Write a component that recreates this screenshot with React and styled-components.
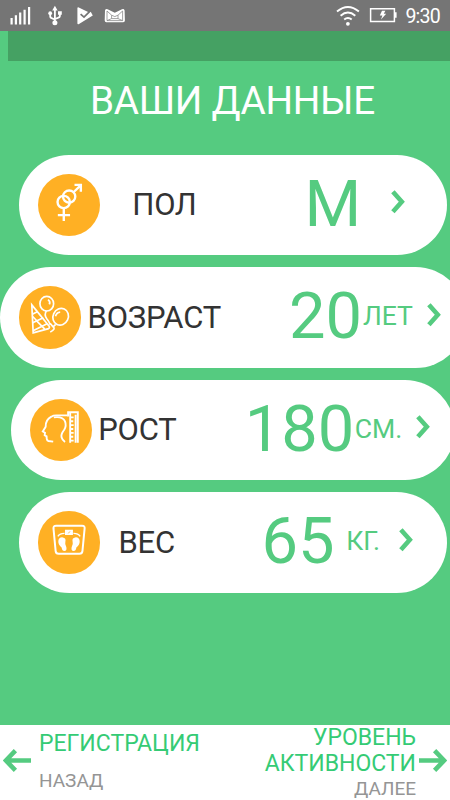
import React from 'react'
import styled, {createGlobalStyle} from 'styled-components'

const green = '#55cb80'

const rows = [
    {id: 'sex', label: 'ПОЛ', value: 'М', unit: '', icon: 'gender', left: 18.6, width: 428, gap: 32.3, cols: [204.4, 87.1, 0]},
    {id: 'age', label: 'ВОЗРАСТ', value: '20', unit: 'ЛЕТ', icon: 'party', left: 0, width: 466, gap: 6.2, cols: [207.7, 73.8, 63.8]},
    {id: 'height', label: 'РОСТ', value: '180', unit: 'СМ.', icon: 'head', left: 11, width: 444, gap: 5.8, cols: [152.4, 109.9, 61.4]},
    {id: 'weight', label: 'ВЕС', value: '65', unit: 'КГ.', icon: 'scale', left: 18.6, width: 428, gap: 18.5, cols: [161.5, 84.8, 52.7]},
]

const icons = {
    gender: (
        <g strokeWidth="2.4">
            <circle cx="25.9" cy="28.2" r="6.2"/>
            <circle cx="31.4" cy="22.8" r="6.2"/>
            <path d="M35.8 18.4L43 11.4M36.8 11H43.2V17.8M26 34.4V47.3M20 41.4H32.3"/>
        </g>
    ),
    party: (
        <g strokeWidth="1.7">
            <path d="M12.9 19L14.3 47.2L29.8 43Q31.4 42 30.2 40.2Z"/>
            <path d="M13.4 28.5L19 25.8M13.8 37L24.5 32M14.2 45L28.3 38M13.5 30.5L17.5 34.5M18 35.5L26 43.5"/>
            <ellipse cx="28" cy="17.8" rx="6.9" ry="7.4"/>
            <path d="M29.2 13.7Q32 15.6 30.6 18.6M27.7 25Q25 29 28 33Q30.5 36 31.5 39"/>
            <ellipse cx="42" cy="31" rx="7.7" ry="8.6" transform="rotate(25 42 31)"/>
            <path d="M36.8 30.5Q38 26.5 41.5 26.3M37 38.7L34.4 41.2Q37.5 43 31.5 46.5M34.4 41.2L31.3 37.5"/>
        </g>
    ),
    head: (
        <g strokeWidth="1.9">
            <path d="M23.4 43L18.4 42.3Q16.5 41.6 16.7 37.6L14.8 36.6L15.1 34L12.9 32.7L15.8 28Q15.5 21 21.5 17.8Q23.5 16.4 27 16.5H38"/>
            <path d="M24 18.5Q33 17.2 35.3 22.5Q37 27 34.5 31Q31 35.5 31.8 38.5Q32.6 41.5 35.3 43.4"/>
            <path d="M38.4 17.6V13.4H48.2V44M40.5 14V44M46 16V44M41 18.5H44M41 22.4H43.6M41 26.3H44M41 30.2H43.6M41 34.1H44M41 38H43.6M41 42H44"/>
        </g>
    ),
    scale: (
        <>
            <path d="M18.2 14.8H44.5Q47.3 14.8 47 17.6L44.8 40.5Q44.5 43.2 41.8 43.2H20.8Q18 43.2 17.8 40.5L15.6 17.6Q15.4 14.8 18.2 14.8Z"/>
            <path strokeWidth="1.4" d="M20 25.5Q22 22.5 26.8 22.6M35.7 22.6Q40.5 22.5 42.5 25.5"/>
            <path fill="#fff" stroke="none" d="M27.2 19H35.2V24.2H27.2ZM20.5 30.3Q21 26.2 25 26.6Q28.5 27 27.6 31Q26.8 33.5 28.6 36.5Q29.3 40.3 26.6 40.4Q24.3 40.4 23.8 36.8Q20.2 34 20.5 30.3ZM42 30.3Q41.5 26.2 37.5 26.6Q34 27 34.9 31Q35.7 33.5 33.9 36.5Q33.2 40.3 35.9 40.4Q38.2 40.4 38.7 36.8Q42.3 34 42 30.3Z"/>
            <path stroke="#ffb024" strokeWidth=".8" d="M30.5 22.6L32.2 20.6"/>
        </>
    ),
}

const StatusIcons = () => (
    <svg width="120" height="31" viewBox="0 0 120 31" fill="#fff">
        <path d="M0.5 18H2.7V24.5H0.5ZM4.8 15.2H7V24.5H4.8ZM9.1 12.5H11.3V24.5H9.1ZM13.5 9.8H15.7V24.5H13.5ZM18 7H20.2V24.5H18Z"/>
        <path fill="none" stroke="#fff" strokeWidth="1.8" d="M44.9 10V22M40.2 13.5V16Q40.2 18 42.2 18.4L44.9 19.5M49.9 12V15.4Q49.9 17.4 47.9 17.8L44.9 19"/>
        <path d="M44.9 5.8L47.6 10.5H42.2ZM48 11.2H51.8V14.8H48Z"/>
        <circle cx="40.2" cy="13.2" r="1.9"/>
        <circle cx="44.9" cy="22.8" r="2.5"/>
        <path d="M67.4 8Q67.6 7 68.8 7.5L78.6 12.2L80.6 11.4L82.8 15.4L69 23.9Q67.6 24.7 67.4 23.4Z"/>
        <path fill="none" stroke="#757575" strokeWidth="1.7" d="M70.6 14.2L74 17.2L80.6 10.6"/>
        <path d="M95 10.4Q95.6 8.4 97.6 9.2L104.8 12.8L112 9.2Q114 8.4 114.6 10.4L114.9 20.6Q114.9 22.2 113.2 22.2H96.4Q94.7 22.2 94.7 20.6Z"/>
        <path fill="none" stroke="#8a8a8a" strokeWidth=".8" d="M97 11L101.6 15.2L104.8 16.6L108 15.2L112.6 11M101.6 15.2V18.6L97 20.6M108 15.2V18.6L112.6 20.6M101.6 18.6H108M97 11V20.6H112.6V11"/>
    </svg>
)

const WifiBattery = () => (
    <svg width="62" height="31" viewBox="336 0 62 31" fill="none" stroke="#fff">
        <path strokeWidth="1.9" d="M337 11.6Q347.9 2.5 358.9 11.6M340.6 15.8Q347.9 9.4 355.3 15.8M344.2 19.5Q347.9 16.4 351.7 19.5"/>
        <circle cx="347.9" cy="23.8" r="1.9" fill="#fff" stroke="none"/>
        <path strokeWidth="1.5" d="M370.6 8.7H394.4V21.4H370.6Z"/>
        <path fill="#fff" stroke="none" d="M394.8 12.3H396.6V17.8H394.8ZM382 10.8H385.4L383.8 13.8H386.2L381 19.6L382.4 15.6H379.8Z"/>
    </svg>
)

const Arrow = ({flip}) => (
    <ArrowSvg $flip={flip} width="28" height="23" viewBox="0 0 28 23">
        <path d="M12.4 1.7L2.9 11.5L12.4 21.3M3.2 11.5H28"/>
    </ArrowSvg>
)

const Row = ({row}) => (
    <Card $left={row.left} $width={row.width} $cols={row.cols}>
        <IconCircle>
            <svg width="62" height="62" viewBox="0 0 62.5 62.5">{icons[row.icon]}</svg>
        </IconCircle>
        <Label $gap={row.gap}>{row.label}</Label>
        <Value>{row.value}</Value>
        <Unit>{row.unit}</Unit>
        <Chevron width="14" height="24" viewBox="0 0 14 24">
            <path d="M1.9 1.8L10.8 11.8L1.9 21.8"/>
        </Chevron>
    </Card>
)

const App = () => (
    <Screen>
        <GlobalStyle/>
        <StatusBar>
            <StatusIcons/>
            <StatusRight>
                <WifiBattery/>
                <Clock>9:30</Clock>
            </StatusRight>
        </StatusBar>
        <Banner/>
        <Title>ВАШИ ДАННЫЕ</Title>
        <List>
            {rows.map(row => <Row key={row.id} row={row}/>)}
        </List>
        <Footer>
            <NavButton>
                <Arrow/>
                <NavText>
                    <NavTitle $space="11.5px">РЕГИСТРАЦИЯ</NavTitle>
                    <NavHint>НАЗАД</NavHint>
                </NavText>
            </NavButton>
            <NavButton>
                <NavText $right>
                    <NavTitle>УРОВЕНЬ<br/>АКТИВНОСТИ</NavTitle>
                    <NavHint>ДАЛЕЕ</NavHint>
                </NavText>
                <Arrow flip/>
            </NavButton>
        </Footer>
    </Screen>
)

export default App

const GlobalStyle = createGlobalStyle `
    body {
        margin: 0;
        background: ${green};
        font-family: Roboto, sans-serif;
    }
    * {
        box-sizing: border-box;
    }
`
const Screen = styled.div `
    display: flex;
    flex-direction: column;
    width: 450px;
    height: 800px;
    overflow: hidden;
    background: ${green};
`
const StatusBar = styled.header `
    display: flex;
    justify-content: space-between;
    align-items: center;
    flex: none;
    height: 31px;
    padding: 0 10px;
    background: #757575;
`
const StatusRight = styled.div `
    display: flex;
    align-items: center;
    gap: 7.5px;
`
const Clock = styled.span `
    color: #fff;
    font-size: 19.6px;
    line-height: 31px;
    letter-spacing: -0.8px;
    padding-top: 1px;
`
const Banner = styled.div `
    flex: none;
    height: 30px;
    margin-left: 7.7px;
    background: #45a163;
`
const Title = styled.h1 `
    flex: none;
    margin: 20px 0 0 15px;
    height: 74px;
    color: #fff;
    font-size: 38.7px;
    font-weight: 400;
    line-height: 40px;
    letter-spacing: -0.3px;
    text-align: center;
    white-space: nowrap;
`
const List = styled.main `
    display: flex;
    flex-direction: column;
    flex: 1;
    gap: 12.4px;
`
const Card = styled.div `
    display: grid;
    grid-template-columns: 62.4px ${props => props.$cols.map(c => `${c}px`).join(' ')} 14px;
    align-items: center;
    flex: none;
    width: ${props => props.$width}px;
    height: 100.1px;
    margin-left: ${props => props.$left}px;
    padding-left: 19px;
    border-radius: 51px;
    background: #fff;
    white-space: nowrap;
    line-height: 1;
`
const IconCircle = styled.div `
    width: 62.4px;
    height: 62.4px;
    border-radius: 50%;
    background: #ffb024;
    svg {
        display: block;
        fill: none;
        stroke: #fff;
        stroke-width: 2;
    }
`
const Label = styled.span `
    padding-left: ${props => props.$gap}px;
    padding-bottom: 1px;
    color: #333;
    font-size: 31px;
    letter-spacing: -0.2px;
`
const Value = styled.span `
    padding-bottom: 2px;
    color: ${green};
    font-size: 65px;
`
const Unit = styled.span `
    padding-bottom: 2px;
    color: ${green};
    font-size: 26.6px;
`
const Chevron = styled.svg `
    margin-bottom: 6px;
    fill: none;
    stroke: ${green};
    stroke-width: 4.6;
`
const Footer = styled.footer `
    display: flex;
    justify-content: space-between;
    flex: none;
    height: 75px;
    padding: 0 3px;
    background: #fff;
`
const NavButton = styled.div `
    display: flex;
    align-items: center;
`
const ArrowSvg = styled.svg `
    flex: none;
    margin-bottom: 5px;
    fill: none;
    stroke: ${green};
    stroke-width: 4.6;
    transform: ${props => props.$flip ? 'scaleX(-1)' : 'none'};
`
const NavText = styled.div `
    align-self: flex-start;
    padding: ${props => props.$right ? '0 3px 0 0' : '6px 0 0 8px'};
    text-align: ${props => props.$right ? 'right' : 'left'};
    white-space: nowrap;
`
const NavTitle = styled.div `
    margin-bottom: ${props => props.$space || 0};
    color: #35cb75;
    font-size: 23px;
    line-height: 26px;
`
const NavHint = styled.div `
    color: #959595;
    font-size: 19px;
    line-height: 24px;
`
